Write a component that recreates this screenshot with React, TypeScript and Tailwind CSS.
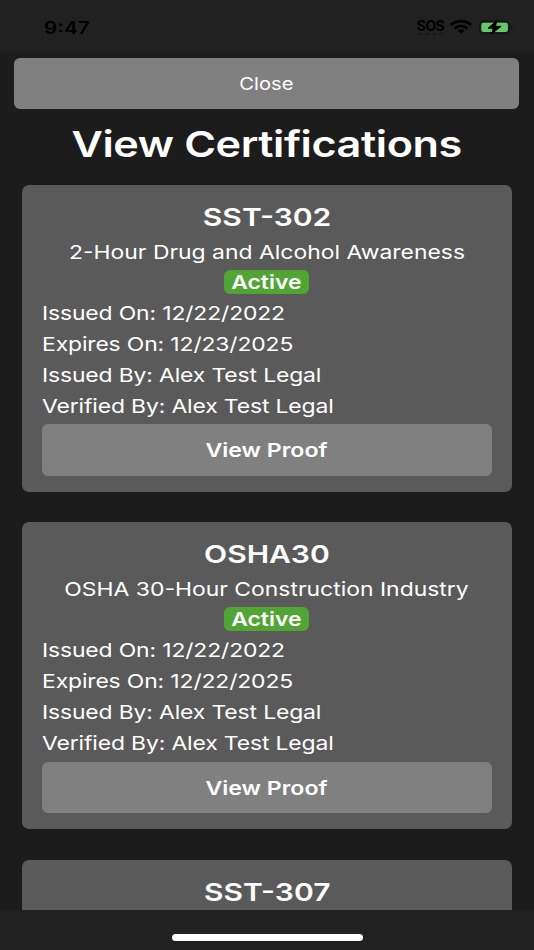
import { clsx } from 'clsx';
import type { ReactNode } from 'react';

interface Certification {
  id: number;
  code: string;
  name?: string;
  status?: string;
  details: string[];
}

const CERTIFICATIONS: Certification[] = [
  {
    id: 1,
    code: 'SST-302',
    name: '2-Hour Drug and Alcohol Awareness',
    status: 'Active',
    details: [
      'Issued On: 12/22/2022',
      'Expires On: 12/23/2025',
      'Issued By: Alex Test Legal',
      'Verified By: Alex Test Legal',
    ],
  },
  {
    id: 2,
    code: 'OSHA30',
    name: 'OSHA 30-Hour Construction Industry',
    status: 'Active',
    details: [
      'Issued On: 12/22/2022',
      'Expires On: 12/22/2025',
      'Issued By: Alex Test Legal',
      'Verified By: Alex Test Legal',
    ],
  },
  { id: 3, code: 'SST-307', details: [] },
];

// Extended-width lettering
const Wide = ({ children, className }: { children: ReactNode; className?: string }) => (
  <span className={clsx('inline-block whitespace-nowrap', className ?? 'scale-x-[1.2]')}>{children}</span>
);

const StatusBar = () => (
  <div className="h-[52px] shrink-0 bg-[#212121] flex items-start justify-between pt-[15px] pl-[44px] pr-[20px] text-black">
    <Wide className="origin-left scale-x-[1.22] pt-px text-[17px] leading-6 font-semibold">9:47</Wide>
    <div className="flex items-start pt-px">
      <div className="w-[27px] flex flex-col items-center">
        <span className="pt-px text-[14px] leading-[18px] font-bold tracking-[-0.6px]">SOS</span>
        <div className="-mt-[2px] flex gap-[3px]">
          {[0, 1, 2, 3].map(i => (
            <span key={i} className="w-[4px] h-[2px] rounded-[1px] bg-[#191919]" />
          ))}
        </div>
      </div>
      <svg className="ml-[6px] mt-[3px]" width="22" height="15" viewBox="0 0 22 15" fill="none">
        <path d="M.8 6C6.8.9 15.2.9 21.2 6" stroke="currentColor" strokeWidth="2.8" />
        <path d="M4.6 9.5C8.4 6.2 13.6 6.2 17.4 9.5" stroke="currentColor" strokeWidth="2.8" />
        <path d="M11 14.6 7.6 11.8C9.4 10.2 12.6 10.2 14.4 11.8Z" fill="currentColor" />
      </svg>
      <svg className="ml-[7px] mt-[3px]" width="35" height="16" viewBox="0 0 35 16">
        <rect x=".8" y="2" width="29.6" height="12.4" rx="4" fill="none" stroke="#151515" strokeWidth="1.4" />
        <path d="M32.2 6.2c1.8.5 1.8 3.5 0 4Z" fill="#121212" />
        <rect x="2.3" y="3.7" width="26.6" height="9.2" rx="2.2" fill="#65c969" />
        <path d="M17.6 1.8 9 9.2h5.4L12.6 14.8 22.2 7.3h-5.6Z" fill="#000" stroke="#000" strokeWidth="1" strokeLinejoin="round" />
      </svg>
    </div>
  </div>
);

const CertificationCard = ({ cert }: { cert: Certification }) => (
  <div className="h-[307px] shrink-0 rounded-[7px] bg-[#5a5a5a] px-[20px] pt-[15px]">
    <h2 className="h-[36px] text-center text-[24.8px] leading-[34px] font-semibold">
      <Wide className="scale-x-[1.21]">{cert.code}</Wide>
    </h2>
    {cert.name && (
      <p className="h-[31px] pt-px text-center text-[19.1px] leading-[31px]">
        <Wide>{cert.name}</Wide>
      </p>
    )}
    {cert.status && (
      <div className="h-[31px] pt-[3px] flex justify-center">
        <span className="w-[85px] h-[24px] rounded-[6px] bg-[#50a534] text-center text-[19.1px] leading-[24px] font-semibold">
          <Wide>{cert.status}</Wide>
        </span>
      </div>
    )}
    {cert.details.length > 0 && (
      <>
        <div className="pl-[0.6px] text-[19.1px] leading-[30.8px]">
          {cert.details.map(line => (
            <p key={line}>
              <Wide className="origin-left scale-x-[1.2] tracking-[-0.12px]">{line}</Wide>
            </p>
          ))}
        </div>
        <button className="mt-[3px] block w-full h-[51.5px] pt-px rounded-[6px] bg-[#808080] text-[19.1px] font-semibold">
          <Wide className="scale-x-[1.21]">View Proof</Wide>
        </button>
      </>
    )}
  </div>
);

const App = () => {
  return (
    <div className="w-[534px] h-[950px] overflow-hidden flex flex-col bg-[#1c1c1c] text-white font-['Inter','Liberation_Sans',sans-serif]">
      <StatusBar />
      <main className="flex-1 min-h-0 overflow-hidden flex flex-col">
        <div className="pt-[5.5px] pl-[14px] pr-[15px]">
          <button className="block w-full h-[51.5px] pt-px rounded-[6px] bg-[#808080] text-[17.4px]">
            <Wide className="scale-x-[1.16]">Close</Wide>
          </button>
        </div>
        <h1 className="h-[76.3px] shrink-0 pt-[12px] pr-px text-center text-[36px] leading-[46px] font-semibold">
          <Wide className="scale-x-[1.2] tracking-[-0.35px]">View Certifications</Wide>
        </h1>
        <div className="flex flex-col gap-[30.2px] pl-[21.5px] pr-[22px]">
          {CERTIFICATIONS.map(cert => (
            <CertificationCard key={cert.id} cert={cert} />
          ))}
        </div>
      </main>
      <div className="h-[40px] shrink-0 bg-[#212121] flex justify-center pt-[24px]">
        <div className="w-[191px] h-[7px] rounded-full bg-white" />
      </div>
    </div>
  );
};

export default App;
